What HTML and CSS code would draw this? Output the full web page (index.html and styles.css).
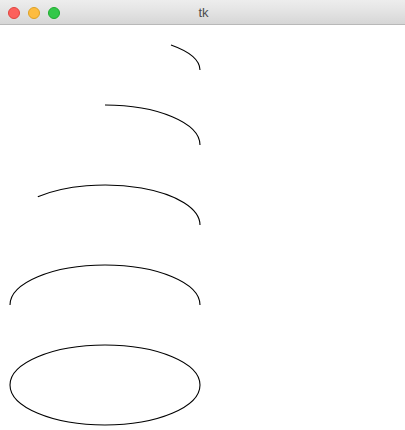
FILE: index.html
```html
<!DOCTYPE html>
<html>
<head>
<meta charset="utf-8">
<link rel="stylesheet" href="styles.css">
</head>
<body>
<div class="window">
  <div class="titlebar">
    <div class="lights">
      <span class="light red"></span>
      <span class="light yellow"></span>
      <span class="light green"></span>
    </div>
    <div class="title">tk</div>
  </div>
  <div class="canvas">
    <svg class="drawing" width="405" height="405" viewBox="0 25 405 405">
      <path d="M 171 45 A 95 35 0 0 1 200 70" />
      <path d="M 105 105 A 95 40 0 0 1 200 145" />
      <path d="M 37.8 196.7 A 95 40 0 0 1 200 225" />
      <path d="M 10 305 A 95 40 0 0 1 200 305" />
      <ellipse cx="105" cy="385" rx="95" ry="40" />
    </svg>
  </div>
</div>
</body>
</html>
```
FILE: styles.css
```css
html, body {
  margin: 0;
  padding: 0;
  background: #ffffff;
}
.window {
  width: 405px;
  height: 430px;
  display: flex;
  flex-direction: column;
  overflow: hidden;
}
.titlebar {
  position: relative;
  height: 24px;
  border-bottom: 1px solid #b8b8b8;
  background: linear-gradient(to bottom, #ededed 0%, #e5e5e5 40%, #d6d6d6 100%);
  display: flex;
  align-items: center;
  justify-content: center;
  flex-shrink: 0;
}
.lights {
  position: absolute;
  left: 8px;
  top: 7px;
  display: flex;
  gap: 8px;
}
.light {
  width: 12px;
  height: 12px;
  border-radius: 50%;
  box-sizing: border-box;
  display: block;
}
.red { background: #fc605c; border: 1px solid #e0443e; }
.yellow { background: #fdbc40; border: 1px solid #dea123; }
.green { background: #34c84a; border: 1px solid #1eab2d; }
.title {
  font-family: "Liberation Sans", "DejaVu Sans", sans-serif;
  font-size: 13px;
  color: #4d4d4d;
  margin-left: 2px;
  padding-top: 2px;
  line-height: 24px;
}
.canvas {
  flex: 1;
  background: #ffffff;
}
.drawing {
  display: block;
}
.drawing path, .drawing ellipse {
  fill: none;
  stroke: #000000;
  stroke-width: 1.1;
}
```
